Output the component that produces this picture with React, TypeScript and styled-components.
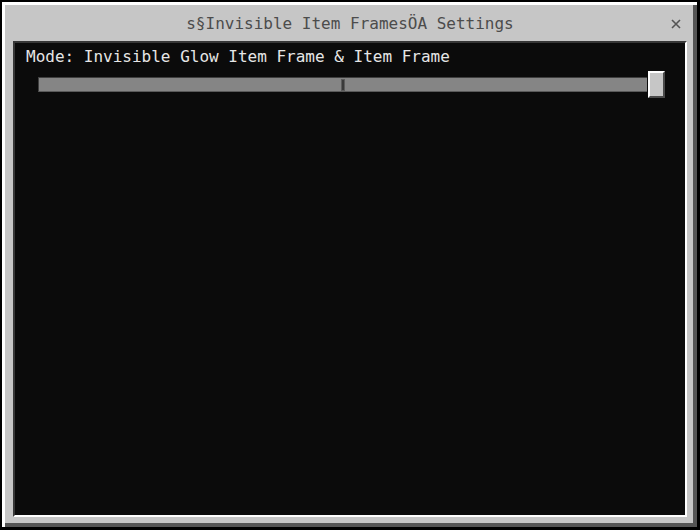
import React from "react";
import styled, { createGlobalStyle } from "styled-components";

const Global = createGlobalStyle`
  html, body { margin: 0; padding: 0; background: #000; }
  * { box-sizing: border-box; }
`;

const Window = styled.div`
  width: 700px;
  height: 530px;
  background: #c6c6c6;
  border-style: solid;
  border-color: #000;
  border-width: 2px 3px 3px 2px;
  box-shadow: inset 3px 3px 0 #ffffff, inset -4px -4px 0 #555555;
  display: flex;
  flex-direction: column;
  padding: 0 10px 10px 11px;
  font-family: "DejaVu Sans Mono", "Liberation Mono", monospace;
  font-size: 16px;
`;

const TitleBar = styled.div`
  height: 39px;
  display: grid;
  grid-template-columns: 1fr auto 1fr;
  align-items: center;
  padding-top: 4px;
`;

const Title = styled.div`
  grid-column: 2;
  color: #4c4c4c;
  line-height: 18px;
  white-space: pre;
`;

const Close = styled.button`
  grid-column: 3;
  justify-self: end;
  margin-right: 5px;
  width: 12px;
  height: 12px;
  padding: 0;
  border: 0;
  background: transparent;
  display: flex;
  align-items: center;
  justify-content: center;
`;

const Panel = styled.div`
  flex: 1;
  background: #0b0b0b;
  border-style: solid;
  border-width: 2px;
  border-color: #373737 #ffffff #ffffff #373737;
  padding: 5px 20px 0 11px;
  display: flex;
  flex-direction: column;
`;

const Label = styled.div`
  color: #e6e6e6;
  line-height: 18px;
  white-space: pre;
`;

const SliderRow = styled.div`
  display: flex;
  align-items: center;
  margin-top: 5px;
  margin-left: 12px;
  height: 27px;
`;

const Track = styled.div`
  flex: 1;
  height: 15px;
  background: #858585;
  border-top: 1px solid #3f3f3f;
  border-bottom: 1px solid #5a5a5a;
  border-left: 1px solid #3f3f3f;
  display: flex;
  justify-content: center;
  align-items: center;
`;

const Tick = styled.div`
  width: 4px;
  height: 12px;
  background: #3a3a3a;
  border: 1px solid #5c5c5c;
`;

const Thumb = styled.div`
  width: 17px;
  height: 27px;
  margin-left: 1px;
  background: #c6c6c6;
  border-style: solid;
  border-width: 2px;
  border-color: #ffffff #4a4a4a #4a4a4a #ffffff;
`;

export default function App() {
  return (
    <>
      <Global />
      <Window>
        <TitleBar>
          <Title>s§Invisible Item FramesÖA Settings</Title>
          <Close aria-label="Close">
            <svg width="10" height="10" viewBox="0 0 10 10">
              <path d="M1 1 L9 9 M9 1 L1 9" stroke="#555" strokeWidth="1.6" />
            </svg>
          </Close>
        </TitleBar>
        <Panel>
          <Label>Mode: Invisible Glow Item Frame &amp; Item Frame</Label>
          <SliderRow>
            <Track>
              <Tick />
            </Track>
            <Thumb />
          </SliderRow>
        </Panel>
      </Window>
    </>
  );
}
